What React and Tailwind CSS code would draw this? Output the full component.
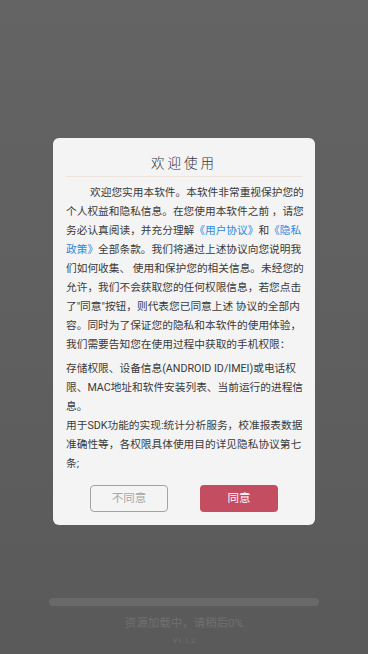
const FONT = { fontFamily: "Roboto, 'Noto Sans CJK SC', sans-serif" };

const Link = ({ children }) => <span className="text-[#2a8ae0]">{children}</span>;

const Line = ({ children, indent }) => (
    <div className={`whitespace-nowrap ${indent ? 'pl-[24px]' : ''}`}>{children}</div>
);

const PrivacyDialog = () => (
    <div className="w-[262px] rounded-[6px] bg-[#f4f4f4] px-[13px] pt-[15px] pb-[13px]">
        <div className="text-center text-[13.5px] font-light leading-[20px] tracking-[3px] text-[#333]">欢迎使用</div>
        <div className="mt-[3px] h-px bg-[#ebe2dc]" />

        <div className="mt-[6px] text-[10.7px] leading-[19px] text-[#3a3a3a]">
            <Line indent>欢迎您实用本软件。本软件非常重视保护您的</Line>
            <Line>个人权益和隐私信息。在您使用本软件之前 ，请您</Line>
            <Line>务必认真阅读，并充分理解<Link>《用户协议》</Link>和<Link>《隐私</Link></Line>
            <Line><Link>政策》</Link>全部条款。我们将通过上述协议向您说明我</Line>
            <Line>们如何收集、 使用和保护您的相关信息。未经您的</Line>
            <Line>允许，我们不会获取您的任何权限信息，若您点击</Line>
            <Line>了"同意"按钮，则代表您已同意上述 协议的全部内</Line>
            <Line>容。同时为了保证您的隐私和本软件的使用体验，</Line>
            <Line>我们需要告知您在使用过程中获取的手机权限：</Line>

            <div className="mt-[5px]">
                <Line>存储权限、设备信息(ANDROID ID/IMEI)或电话权</Line>
                <Line>限、MAC地址和软件安装列表、当前运行的进程信</Line>
                <Line>息。</Line>
                <Line>用于SDK功能的实现:统计分析服务，校准报表数据</Line>
                <Line>准确性等，各权限具体使用目的详见隐私协议第七</Line>
                <Line>条;</Line>
            </div>
        </div>

        <div className="mt-[12px] flex justify-center gap-[32px]">
            <button className="h-[27px] w-[78px] rounded-[4px] border border-[#a3a3a3] text-[11.5px] text-[#a8a8a8]">
                不同意
            </button>
            <button className="h-[27px] w-[78px] rounded-[4px] bg-[#c44d62] text-[11.5px] text-white">
                同意
            </button>
        </div>
    </div>
);

export default function App() {
    return (
        <div
            className="relative flex h-[654px] w-full flex-col justify-end bg-gradient-to-b from-[#646464] to-[#5a5a5a]"
            style={FONT}
        >
            {/* loading screen behind the dialog */}
            <div className="flex flex-col items-center pb-[7px]">
                <div className="h-[8px] w-[270px] rounded-full bg-[#696969]" />
                <div className="mt-[9px] text-[11.5px] leading-[16px] text-[#707070]">资源加载中，请稍后0%</div>
                <div className="mt-[4px] text-[8px] leading-[12px] text-[#6c6c6c]">V1.1.2</div>
            </div>

            {/* modal */}
            <div className="absolute inset-x-0 top-[138px] flex justify-center">
                <PrivacyDialog />
            </div>
        </div>
    );
}
